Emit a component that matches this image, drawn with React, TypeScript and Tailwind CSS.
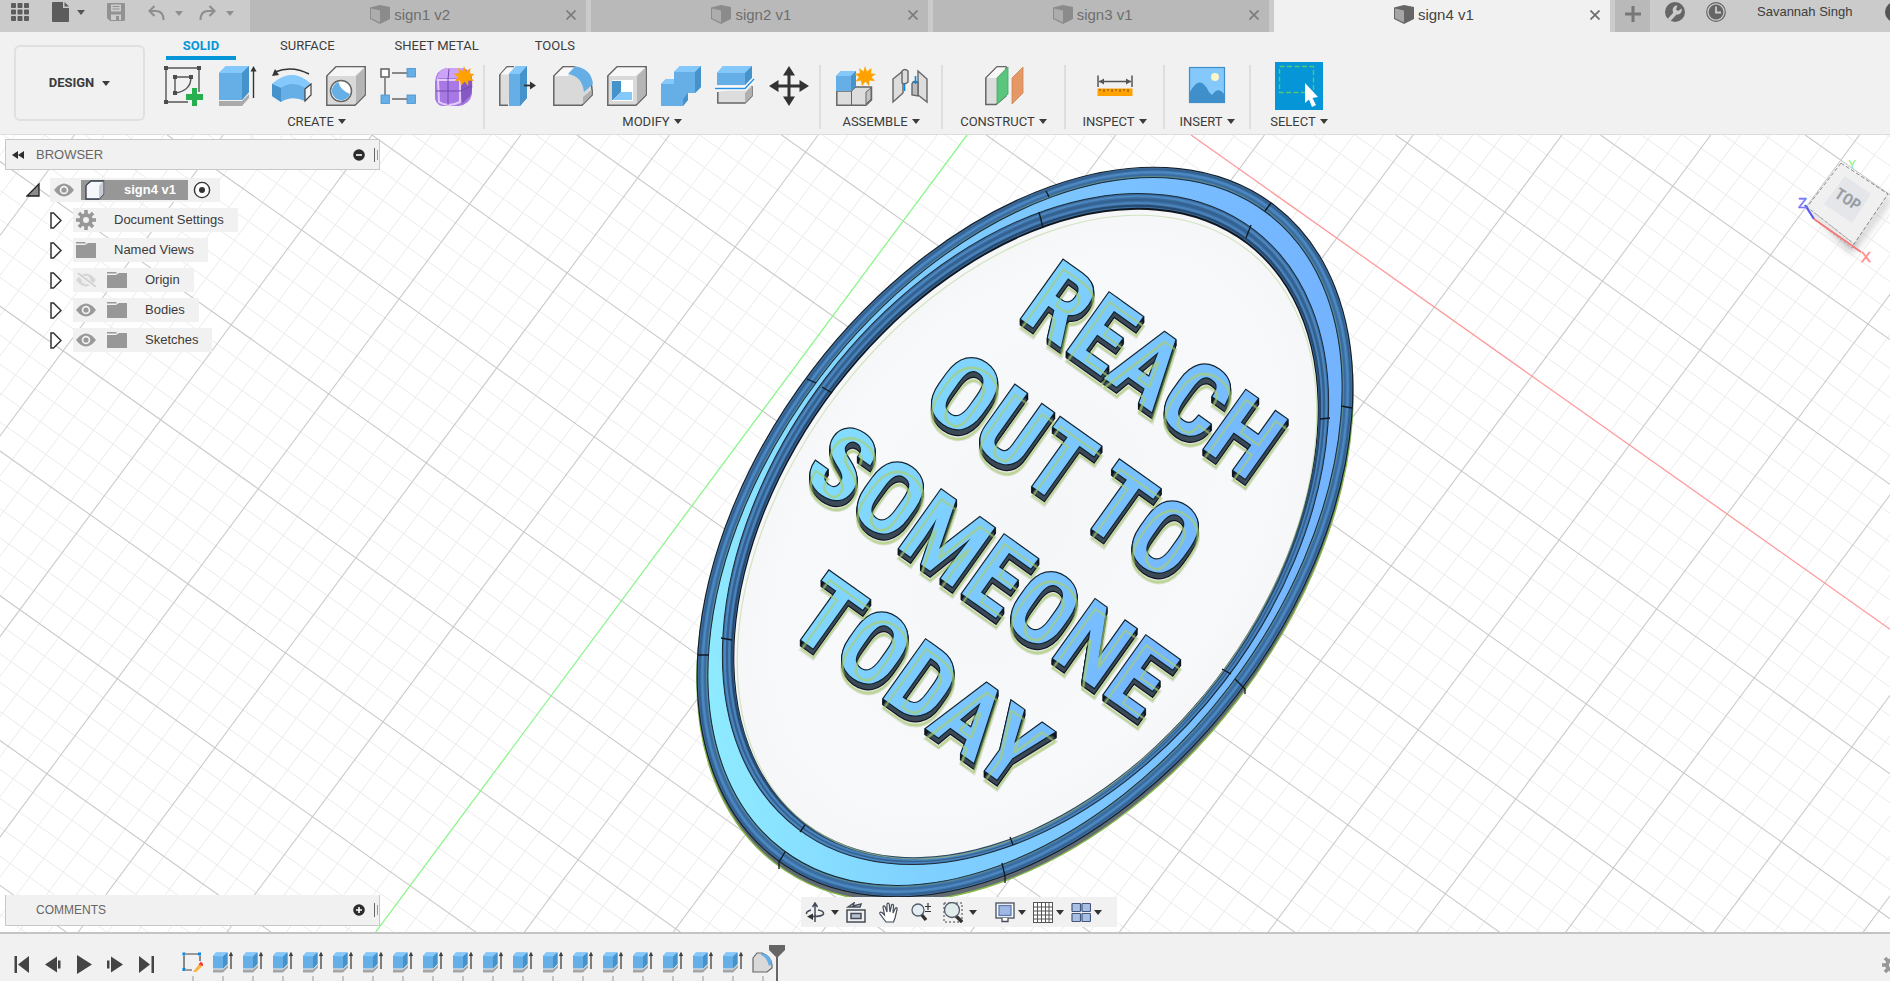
import React from 'react';

type IconProps = { className?: string };

const Caret = ({ className = 'w-2 h-[5px]' }: IconProps) => (
  <svg viewBox="0 0 8 5" className={className} aria-hidden="true">
    <path d="M0 0H8L4 5Z" fill="currentColor" />
  </svg>
);

/* ---------- top bar icons ---------- */

const AppsIcon = () => (
  <svg viewBox="0 0 18 18" className="size-[18px]" fill="#5c5c5c">
    {[0, 6.5, 13].map((y) => [0, 6.5, 13].map((x) => <rect key={`${x}-${y}`} x={x} y={y} width="5" height="5" rx="0.8" />))}
  </svg>
);
const FileIcon = () => (
  <svg viewBox="0 0 17 20" className="w-[17px] h-5" fill="#5c5c5c">
    <path d="M1 0H11V6H17V19Q17 20 16 20H1Q0 20 0 19V1Q0 0 1 0ZM12.5 0L17 4.5H12.5Z" />
  </svg>
);
const SaveIcon = () => (
  <svg viewBox="0 0 18 18" className="size-[18px]">
    <path d="M1 0H17Q18 0 18 1V17Q18 18 17 18H3L0 15V1Q0 0 1 0Z" fill="#929292" />
    <rect x="4" y="1.5" width="10" height="7" fill="#cbcbcb" />
    <path d="M5.5 3.5H12.5M5.5 6H12.5" stroke="#929292" strokeWidth="1.2" />
    <rect x="4" y="11.5" width="10" height="5.5" fill="#cbcbcb" />
    <rect x="9" y="13" width="3" height="4" fill="#929292" />
  </svg>
);
const UndoIcon = ({ className = 'w-[17px] h-4' }: IconProps) => (
  <svg viewBox="0 0 17 16" className={className} fill="none" stroke="#8f8f8f" strokeWidth="2.2">
    <path d="M6.5 1L1.5 6L6.5 11" />
    <path d="M2 6H8.5Q15.5 6.5 15.5 15" />
  </svg>
);
const DocCube = ({ dim }: { dim?: boolean }) => (
  <svg viewBox="0 0 20 19" className="w-5 h-[19px]">
    <path d="M0 2.5L10 0L20 2V14L10 19L0 14Z" fill={dim ? '#8b8b8b' : '#666'} />
    <path d="M1 3.5L10 5.5V17.5L1 13.3Z" fill={dim ? '#adadad' : '#a5a5a5'} />
  </svg>
);
const CrossIcon = ({ dim }: { dim?: boolean }) => (
  <svg viewBox="0 0 10 10" className="size-2.5" stroke={dim ? '#7d7d7d' : '#6d6d6d'} strokeWidth="1.7">
    <path d="M0.5 0.5L9.5 9.5M9.5 0.5L0.5 9.5" />
  </svg>
);
const WrenchBadge = () => (
  <svg viewBox="0 0 20 20" className="size-5">
    <circle cx="10" cy="10" r="10" fill="#666" />
    <path d="M4 18L10 11.5" stroke="#cbcbcb" strokeWidth="3.6" />
    <path d="M16.5 6.5A4.6 4.6 0 1 1 12.5 3.5L11 7.5L13 9Z" fill="#cbcbcb" />
  </svg>
);
const ClockBadge = () => (
  <svg viewBox="0 0 20 20" className="size-5">
    <circle cx="10" cy="10" r="9.3" fill="none" stroke="#666" strokeWidth="1.2" />
    <circle cx="10" cy="10" r="7.4" fill="#666" />
    <path d="M10 4.500V10.500H15" fill="none" stroke="#cbcbcb" strokeWidth="1.800" />
  </svg>
);

/* ---------- ribbon icons ---------- */

const box = 'size-10 block';
const burst = 'M30 0L32 5.500L36.500 2L36 7.500L41 8L36.500 11L40 15L34.500 14.500L34 20L30.500 15.500L27 20L26 14.500L20.500 15.500L24 11L19.500 8L25 7L24 2L28.500 5.500Z';

const SketchIcon = () => (
  <svg viewBox="0 0 40 40" className={box}>
    <path d="M3 2H35V26M2 3V36H24" fill="none" stroke="#555" strokeWidth="1.400" />
    <path d="M11 27V11H27Q27 25 11 27" fill="none" stroke="#555" strokeWidth="1.400" />
    {[[0, 0], [33, 0], [0, 34], [9, 9], [25, 9], [9, 25]].map(([x, y]) => <rect key={`${x}-${y}`} x={x} y={y} width="4" height="4" fill="#4d4d4d" />)}
    <path d="M22 28H28V22H33V28H39V34H33V40H28V34H22Z" fill="#27ae4f" />
  </svg>
);
const ExtrudeIcon = () => (
  <svg viewBox="0 0 40 40" className={box}>
    <path d="M1 35H24L31 28V32L24 40H1Z" fill="#aaa" />
    <path d="M1 7L8 0H31V26L24 34H1Z" fill="#66aee6" />
    <path d="M1 7L8 0H31L24 7Z" fill="#84c8fc" />
    <path d="M24 7L31 0V26L24 34Z" fill="#4693cc" />
    <path d="M35.500 32V4" stroke="#333" strokeWidth="1.400" />
    <path d="M32.500 5.500L35.500 0L38.500 5.500Z" fill="#333" />
  </svg>
);
const RevolveIcon = () => (
  <svg viewBox="0 0 40 40" className={box}>
    <path d="M3 6Q20 -1 37 8" fill="none" stroke="#333" strokeWidth="1.500" />
    <path d="M0 10L3 3L7 9Z" fill="#333" />
    <path d="M0 18Q20 1 39 18L33 35Q20 29 9 36L0 30Z" fill="#66aee6" />
    <path d="M0 18Q20 0 39 18L33 22Q20 14 9 22Z" fill="#84c8fc" />
    <path d="M0 18L9 22V36L0 30Z" fill="#4693cc" />
    <path d="M33 23L39 18V29L33 35Z" fill="#f5f5f5" stroke="#444" strokeWidth="1.200" />
  </svg>
);
const HoleIcon = () => (
  <svg viewBox="0 0 40 40" className={box}>
    <path d="M0.800 10L10 0.800H39.200V29L29 39.200H0.800Z" fill="#d9d9d9" stroke="#666" strokeWidth="1.500" />
    <path d="M2 10L10.500 1.500H38L29 10Z" fill="#f6f6f6" />
    <path d="M30 10L38.500 2V28.500L30 37.500Z" fill="#b5b5b5" />
    <circle cx="15" cy="25" r="10.500" fill="#fff" stroke="#666" strokeWidth="1.500" />
    <path d="M12.500 16Q14 24 24 28A9.300 9.300 0 1 1 12.500 16Z" fill="#66aee6" />
  </svg>
);
const PatternIcon = () => (
  <svg viewBox="0 0 40 40" className={box}>
    <path d="M12 7H28M5 12V29M12 33H28" stroke="#666" strokeWidth="1.400" />
    <rect x="1" y="3" width="8" height="8" fill="#fff" stroke="#555" strokeWidth="1.400" />
    {[[27, 2.500], [1, 29], [27, 29]].map(([x, y]) => <rect key={`${x}-${y}`} x={x} y={y} width="8.500" height="8.500" fill="#66aee6" stroke="#4693cc" strokeWidth="0.800" />)}
  </svg>
);
const FormIcon = () => (
  <svg viewBox="0 0 40 40" className={box}>
    <path d="M1 16Q2 4 12 2H30Q38 6 38 14V28Q36 38 25 40H8Q0 38 1 28Z" fill="#a878e4" />
    <path d="M2 15Q4 4 12 2H30L24 12H5Z" fill="#cba4f7" />
    <path d="M26 14L37 8Q40 22 36 30L28 38Z" fill="#8558c4" />
    <path d="M4 14H26V36Q14 42 5 36Z" fill="none" stroke="#e2ccfb" strokeWidth="2" />
    <path d="M15 3L14 13V39M2 25H26L38 20" stroke="#7148ae" fill="none" strokeWidth="1" />
    <path d={burst} fill="#ffa200" />
  </svg>
);
const PressPullIcon = () => (
  <svg viewBox="0 0 40 40" className={box}>
    <path d="M9 39.200H0.800V9L8 0.800H15" fill="#ddd" stroke="#666" strokeWidth="1.500" />
    <path d="M1.500 8.500L8 1.500H16L9 8.500Z" fill="#f8f8f8" />
    <path d="M10 8L17 0H28V32L21 40H10Z" fill="#66aee6" />
    <path d="M10 8L17 0H28L21 8Z" fill="#84c8fc" />
    <path d="M21 8L28 0V32L21 40Z" fill="#4693cc" />
    <path d="M25 19.500H33" stroke="#333" strokeWidth="1.800" />
    <path d="M31 15.500L37 19.500L31 23.500Z" fill="#333" />
  </svg>
);
const FilletIcon = () => (
  <svg viewBox="0 0 40 40" className={box}>
    <path d="M0.800 10L10 0.800H20Q38 4 39.200 25V29L29 39.200H0.800Z" fill="#d9d9d9" stroke="#666" strokeWidth="1.500" />
    <path d="M1.800 10L10.500 1.600H22L15 10Z" fill="#f8f8f8" />
    <path d="M30 31L38.500 24V29L30 38Z" fill="#b0b0b0" />
    <path d="M15 8L22 0.500Q38 2 40 18L31 26Q29 10 15 8Z" fill="#66aee6" />
  </svg>
);
const ShellIcon = () => (
  <svg viewBox="0 0 40 40" className={box}>
    <path d="M0.800 10L10 0.800H39.200V29L29 39.200H0.800Z" fill="#d9d9d9" stroke="#666" strokeWidth="1.500" />
    <path d="M2 10L10.500 1.500H38L29 10Z" fill="#f8f8f8" />
    <path d="M30 10L38.500 2V28.500L30 37.500Z" fill="#b5b5b5" />
    <rect x="5" y="14" width="21" height="21" fill="#fff" />
    <path d="M5 15H14V26L6 34H5Z" fill="#4693cc" />
    <path d="M14 26H25V34H6Z" fill="#84c8fc" />
  </svg>
);
const CombineIcon = () => (
  <svg viewBox="0 0 40 40" className={box}>
    <path d="M0 18L5 13H13V6L19 0H40V21L34 27H27V34L22 40H0Z" fill="#66aee6" />
    <path d="M13 6L19 0H40L34 6ZM0 18L5 13H13V18Z" fill="#84c8fc" />
    <path d="M34 6L40 0V21L34 27ZM22 33L27 27V34L22 40Z" fill="#4693cc" />
  </svg>
);
const SplitIcon = () => (
  <svg viewBox="0 0 40 40" className={box}>
    <path d="M2.800 26V37H30L37 30V20" fill="#ddd" stroke="#666" strokeWidth="1.500" />
    <path d="M30 27L37 20V30L30 37Z" fill="#b0b0b0" />
    <path d="M2 7L8 0H37V12L30 19H2Z" fill="#66aee6" />
    <path d="M2 7L8 0H37L30 7Z" fill="#84c8fc" />
    <path d="M30 7L37 0V12L30 19Z" fill="#4693cc" />
    <path d="M0 22.500H30L39 13" fill="none" stroke="#fff" strokeWidth="4" />
    <path d="M0 22.500H30L39 13" fill="none" stroke="#2a8fe0" strokeWidth="1.500" />
  </svg>
);
const MoveIcon = () => (
  <svg viewBox="0 0 40 40" className={box} fill="#333">
    <path d="M20 0L26 9.500H21.500V18.500H30.500V14L40 20L30.500 26V21.500H21.500V30.500H26L20 40L14 30.500H18.500V21.500H9.500V26L0 20L9.500 14V18.500H18.500V9.500H14Z" />
  </svg>
);
const ComponentIcon = () => (
  <svg viewBox="0 0 40 40" className={box}>
    <path d="M0.800 25V39.200H30L35.500 34V21H18L15 25Z" fill="#ddd" stroke="#666" strokeWidth="1.500" />
    <path d="M15.500 25V39M15.500 25L20 21M30 26V38L35 33V22Z" stroke="#666" fill="#c4c4c4" />
    <path d="M0 10L5 5H20V20L15 25H0Z" fill="#66aee6" />
    <path d="M0 10L5 5H20L15 10Z" fill="#84c8fc" />
    <path d="M15 10L20 5V20L15 25Z" fill="#4693cc" />
    <path d={burst} fill="#ffa200" transform="translate(-1 0)" />
  </svg>
);
const JointIcon = () => (
  <svg viewBox="0 0 40 40" className={box} stroke="#666" strokeWidth="1.400">
    <path d="M3 13L13 5V27L3 36Z" fill="#ddd" />
    <path d="M12 5Q15 2 18 5V16Q15 19 12 17Z" fill="#ddd" />
    <path d="M37 13L28 5V29L37 36Z" fill="#ddd" />
    <path d="M28 16Q23 14 22 18V29L28 30Z" fill="#bbb" />
    <path d="M14.500 18V25M25.500 10V18M23.500 16H27.500" stroke="#0a84dc" strokeWidth="1.600" fill="none" />
  </svg>
);
const PlaneIcon = () => (
  <svg viewBox="0 0 40 40" className={box}>
    <path d="M1.800 12L13 0.800H22V30L12 38.500H1.800Z" fill="#ddd" stroke="#666" strokeWidth="1.500" />
    <path d="M2.800 12L13 1.600H22L12 12Z" fill="#f8f8f8" />
    <path d="M13 12L24 1V28L13 38Z" fill="#5bc57d" stroke="#3fa863" strokeWidth="0.800" />
    <path d="M28 12L39 1V27L28 38Z" fill="#e59866" stroke="#cf8350" strokeWidth="0.800" />
  </svg>
);
const MeasureIcon = () => (
  <svg viewBox="0 0 40 40" className={box}>
    <path d="M3 9.500V21M37 9.500V21M4 15.500H36" stroke="#555" strokeWidth="1.500" />
    <path d="M4 15.500L9 12.500V18.500ZM36 15.500L31 12.500V18.500Z" fill="#555" />
    <rect x="2.500" y="22.500" width="35" height="7.500" fill="#ffa200" />
    <path d="M5 23V25M9 23V26M13 23V25M17 23V26M21 23V25M25 23V26M29 23V25M33 23V26" stroke="#8a5a00" strokeWidth="1.200" />
  </svg>
);
const InsertIcon = () => (
  <svg viewBox="0 0 40 40" className={box}>
    <rect x="2.500" y="1.500" width="35" height="35" fill="#84c8fc" stroke="#3f8fca" strokeWidth="1.200" />
    <path d="M3 26Q13 7 22 26L25 29Q31 20 37 28V36H3Z" fill="#3f8fca" />
    <circle cx="28" cy="11" r="4" fill="#fdf6c8" />
  </svg>
);
const SelectIcon = () => (
  <svg viewBox="0 0 48 48" className="size-12 block -my-1">
    <rect width="48" height="48" fill="#0696d7" />
    <rect x="4.500" y="4.500" width="34" height="26" fill="none" stroke="#52c878" strokeWidth="1.400" strokeDasharray="5 2.500" />
    <path d="M30 21L43 35L37.500 36L41 43L37 45L34 37.500L30 41Z" fill="#fff" />
  </svg>
);

/* ---------- ribbon ---------- */

type Group = { label: string; width: string; tools: [string, React.FC][] };

const groups: Group[] = [
  { label: 'CREATE', width: 'w-[335px]', tools: [['Create sketch', SketchIcon], ['Extrude', ExtrudeIcon], ['Revolve', RevolveIcon], ['Hole', HoleIcon], ['Pattern', PatternIcon], ['Create form', FormIcon]] },
  { label: 'MODIFY', width: 'w-[336px]', tools: [['Press pull', PressPullIcon], ['Fillet', FilletIcon], ['Shell', ShellIcon], ['Combine', CombineIcon], ['Split body', SplitIcon], ['Move', MoveIcon]] },
  { label: 'ASSEMBLE', width: 'w-[122px]', tools: [['New component', ComponentIcon], ['Joint', JointIcon]] },
  { label: 'CONSTRUCT', width: 'w-[123px]', tools: [['Offset plane', PlaneIcon]] },
  { label: 'INSPECT', width: 'w-[99px]', tools: [['Measure', MeasureIcon]] },
  { label: 'INSERT', width: 'w-[86px]', tools: [['Insert image', InsertIcon]] },
  { label: 'SELECT', width: 'w-24', tools: [['Select', SelectIcon]] },
];

const TopBar = () => (
  <header className="flex h-8 shrink-0 bg-[#cbcbcb]">
    <div className="flex w-[250px] shrink-0 items-start pl-[11px] pt-[3px] text-[#8f8f8f]">
      <button aria-label="Data panel"><AppsIcon /></button>
      <button aria-label="File" className="-mt-px ml-[23px] flex items-center gap-2 text-[#555]"><FileIcon /><Caret /></button>
      <button aria-label="Save" className="ml-[22px]"><SaveIcon /></button>
      <button aria-label="Undo" className="ml-[23px] mt-0.5 flex items-center gap-2.5"><UndoIcon /><Caret /></button>
      <button aria-label="Redo" className="ml-4 mt-0.5 flex items-center gap-2.5"><UndoIcon className="w-[17px] h-4 -scale-x-100" /><Caret /></button>
    </div>
    <nav className="flex flex-1 gap-[5px]">
      {['sign1 v2', 'sign2 v1', 'sign3 v1', 'sign4 v1'].map((name, i) => {
        const active = i === 3;
        return (
          <div key={name} className={`flex flex-1 items-center pr-2.5 ${active ? 'bg-[#f1f1f1] text-[#444]' : 'bg-[#b9b9b9] text-[#6e6e6e]'}`}>
            <a href="#" className="flex flex-1 items-center justify-center gap-1 pb-1 pl-1 text-[15px] leading-5">
              <DocCube dim={!active} />
              <span className="pt-0.5">{name}</span>
            </a>
            <button aria-label={`Close ${name}`} className="pb-0.5"><CrossIcon dim={!active} /></button>
          </div>
        );
      })}
    </nav>
    <div className="flex w-[280px] shrink-0 items-start overflow-hidden pl-[5px]">
      <button aria-label="New tab" className="flex h-8 w-[35px] shrink-0 items-center justify-center bg-[#b9b9b9]">
        <svg viewBox="0 0 16 16" className="-mt-1 size-4" stroke="#777" strokeWidth="3"><path d="M8 0V16M0 8H16" /></svg>
      </button>
      <button aria-label="Extensions" className="ml-[15px] mt-0.5 shrink-0"><WrenchBadge /></button>
      <button aria-label="Job status" className="ml-[21px] mt-0.5 shrink-0"><ClockBadge /></button>
      <span className="ml-[31px] mt-1 shrink-0 whitespace-nowrap text-[13px] leading-4 text-[#3c3c3c]">Savannah Singh</span>
      <span className="ml-[33px] mt-0.5 size-5 shrink-0 rounded-full bg-[#555]" />
    </div>
  </header>
);

const Ribbon = () => (
  <section className="flex h-[103px] shrink-0 border-b border-[#dcdcdc] bg-[#f1f1f1] font-['Roboto','Liberation_Sans',sans-serif] text-[13px] leading-4 text-[#3c3c3c]">
    <button className="ml-3.5 mt-[13px] flex h-[76px] w-[131px] items-center justify-center gap-2 rounded-md border-2 border-[#e0e0e0] font-bold">
      DESIGN <Caret />
    </button>
    <div className="ml-[5px] flex flex-col">
      <nav className="flex h-7 items-stretch pl-4">
        <a href="#" className="flex w-[70px] justify-center border-b-4 border-[#0696d7] pt-1.5 font-bold text-[#0696d7]">SOLID</a>
        <a href="#" className="ml-11 pt-1.5">SURFACE</a>
        <a href="#" className="ml-[60px] pt-1.5">SHEET METAL</a>
        <a href="#" className="ml-14 pt-1.5">TOOLS</a>
      </nav>
      <div className="mt-[5px] flex h-16">
        {groups.map((g, i) => (
          <div key={g.label} className={`flex flex-col items-center ${g.width} ${i < groups.length - 1 ? 'border-r-2 border-[#dedede]' : ''}`}>
            <div className={`flex h-[41px] items-start gap-3.5 pt-px ${g.tools.length > 1 ? 'pl-1' : ''}`}>
              {g.tools.map(([name, Icon]) => (
                <button key={name} aria-label={name}><Icon /></button>
              ))}
            </div>
            <button className="mt-2 flex items-center gap-1">{g.label}<Caret className="mb-0.5 w-2 h-[5px]" /></button>
          </div>
        ))}
      </div>
    </div>
  </section>
);

/* ---------- modelling canvas ---------- */

const span = (from: number, to: number) => Array.from({ length: to - from + 1 }, (_, i) => from + i);
const H = 1600;

const Grid = () => (
  <g>
    {[false, true].map((major) => (
      <g key={String(major)} stroke={major ? '#cacaca' : '#ebebeb'} strokeWidth={major ? 1.1 : 1}>
        {span(-40, 110).filter((k) => k !== 0 && (k % 5 === 0) === major).map((k) => (
          <line key={`a${k}`} x1={967 + k * 29.75} y1="0" x2={967 + k * 29.75 - H / 1.348} y2={H} />
        ))}
        {span(-90, 50).filter((k) => k !== 0 && (k % 5 === 0) === major).map((k) => (
          <line key={`b${k}`} x1={1191 + k * 40.95} y1="0" x2={1191 + k * 40.95 + H / 0.707} y2={H} />
        ))}
      </g>
    ))}
    <line x1="967" y1="0" x2={967 - H / 1.348} y2={H} stroke="#8cf58c" strokeWidth="1.3" />
    <line x1="1191" y1="0" x2={1191 + H / 0.707} y2={H} stroke="#ff9a9a" strokeWidth="1.3" />
  </g>
);

type RingProps = { cx: number; cy: number; rx: number; ry: number; fill?: string; stroke?: string; w?: number; o?: number };
const Ring = ({ cx, cy, rx, ry, fill = 'none', stroke = 'none', w = 1, o = 1 }: RingProps) => (
  <ellipse cx={cx} cy={cy} rx={rx} ry={ry} transform={`rotate(-52.6 ${cx} ${cy})`} fill={fill} stroke={stroke} strokeWidth={w} opacity={o} />
);

const lines: [string, number, number][] = [
  ['REACH', 1153, -335],
  ['OUT TO', 1136, -205],
  ['SOMEONE', 1136, -77],
  ['TODAY', 1143, 54],
];

const Sign = () => (
  <g transform="translate(0 -133)">
    <defs>
      <linearGradient id="face" gradientUnits="userSpaceOnUse" x1="700" y1="560" x2="1340" y2="500" gradientTransform="rotate(52.6 1024 529)">
        <stop offset="0" stopColor="#8eeaff" />
        <stop offset="0.3" stopColor="#7fd0ff" />
        <stop offset="0.65" stopColor="#7bc4ff" />
        <stop offset="1" stopColor="#74b4ff" />
      </linearGradient>
      <linearGradient id="letter" gradientUnits="userSpaceOnUse" x1="930" y1="0" x2="1340" y2="-60">
        <stop offset="0" stopColor="#84dfff" />
        <stop offset="1" stopColor="#74b6ff" />
      </linearGradient>
      <radialGradient id="plate" cx="0.5" cy="0.5" r="0.6">
        <stop offset="0" stopColor="#f5f6f8" />
        <stop offset="0.7" stopColor="#f8f9fa" />
        <stop offset="1" stopColor="#f3f3f5" />
      </radialGradient>
      <filter id="contour" x="-5%" y="-5%" width="110%" height="110%">
        <feMorphology in="SourceAlpha" operator="dilate" radius="0.6" result="grown" />
        <feMorphology in="SourceAlpha" operator="erode" radius="0.6" result="shrunk" />
        <feComposite in="grown" in2="shrunk" operator="out" result="edge" />
        <feFlood floodColor="#a9cf6c" />
        <feComposite in2="edge" operator="in" />
      </filter>
      <g id="legend" textAnchor="middle" fontFamily="'Roboto Condensed', 'Roboto', sans-serif" fontWeight="700" fontSize="102" style={{ paintOrder: 'stroke' }}>
        {lines.map(([t, x, y]) => <text key={t} x={x} y={y}>{t}</text>)}
      </g>
    </defs>

    <Ring cx={1025} cy={535} rx={411} ry={268} fill="#626a72" stroke="#86b84a" w={1.4} />
    <Ring cx={1025} cy={530} rx={411} ry={267.5} fill="#4278ae" stroke="#16202a" w={1.2} />
    <Ring cx={1025} cy={530} rx={409} ry={265} stroke="#34618f" w={2} />
    <Ring cx={1025} cy={530} rx={406} ry={262} stroke="#4c88c1" w={2} />
    <Ring cx={1025} cy={530} rx={403} ry={259.5} stroke="#3a6ca0" w={2} />
    <Ring cx={1025} cy={529.5} rx={401.5} ry={257.5} stroke="#7ba65c" w={0.8} o={0.5} />
    <Ring cx={1025} cy={529.5} rx={400} ry={256.5} fill="url(#face)" stroke="#1c2a38" w={1} />
    <Ring cx={1025.5} cy={527} rx={376.5} ry={250.5} fill="#3a6da1" stroke="#1c2a38" w={1} />
    <Ring cx={1025.5} cy={527.5} rx={374} ry={248} stroke="#4c87c0" w={2} />
    <Ring cx={1025.5} cy={528.5} rx={371.5} ry={246} stroke="#34618f" w={2} />
    <Ring cx={1025.5} cy={529.5} rx={369} ry={244} stroke="#4a83bb" w={2} />
    <Ring cx={1026} cy={530} rx={366.5} ry={242} stroke="#27496d" w={2} />
    <Ring cx={1026} cy={530.5} rx={365} ry={240.5} fill="#10161c" />
    <Ring cx={1026} cy={531.5} rx={364} ry={239.5} fill="url(#plate)" />
    <Ring cx={1027} cy={535} rx={362} ry={237.5} stroke="#b9d79a" w={1.2} o={0.6} />

    <path
      d="M1046 189L1049 195M1039 210L1043 226M1271 201L1265 209M1251 223L1246 236M1341 404L1352 406M1320 417L1330 416M807 377L816 381M822 385L832 391M698 653L709 653M721 636L732 638M1222 667L1231 672M1235 677L1245 687V692M785 850L779 860V867M805 823L800 830M1002 861L1005 874V881M1010 835L1013 843"
      stroke="#101820" strokeWidth="1.3" fill="none"
    />

    <g transform="rotate(35.5)">
      <use href="#legend" transform="translate(5.8 8.1)" fill="#e4e4e7" stroke="#e4e4e7" strokeWidth="4" />
      {span(1, 6).map((d) => (
        <use key={d} href="#legend" transform={`translate(${d * 0.56} ${d * 0.79})`} fill="#3b4856" stroke="#10161c" strokeWidth="2.4" />
      ))}
      <use href="#legend" fill="url(#letter)" stroke="#10222f" strokeWidth="2.4" />
      <g filter="url(#contour)" opacity="0.7">
        <use href="#legend" transform="translate(5.8 8.1)" fill="#000" />
      </g>
    </g>
  </g>
);

const ViewCube = () => (
  <svg viewBox="0 0 130 140" className="absolute right-0 top-0 h-[140px] w-[130px]" aria-label="View cube">
    <defs><filter id="soft"><feGaussianBlur stdDeviation="4" /></filter></defs>
    <text x="88" y="34" fontSize="12" fill="#7ef07e" fontFamily="Liberation Sans, sans-serif">Y</text>
    <path d="M55 80L92 118L130 66V58L96 104Z" fill="#999" opacity="0.7" filter="url(#soft)" />
    <path d="M81 28L128 59L94 109L47 72Z" fill="#f0f0f1" stroke="#8a8a8a" strokeWidth="1" strokeDasharray="4 2" />
    <path d="M47 72L94 109L92 113L54 84Z" fill="#e9e9e9" stroke="#999" strokeWidth="0.8" strokeDasharray="3 1.5" />
    <path d="M85 41L111 59L92 88L64 69Z" fill="#e4e6e9" />
    <text x="0" y="0" transform="translate(85 69) rotate(33)" textAnchor="middle" fontSize="16" fontWeight="700" fill="#9a9fa5" fontFamily="Roboto Condensed, Roboto, sans-serif">TOP</text>
    <path d="M45 70L54 84" stroke="#5858f0" strokeWidth="2.2" />
    <path d="M54 84L101 117" stroke="#f57878" strokeWidth="1.8" />
    <text x="38" y="73" fontSize="15" fill="#7a7af8" stroke="#7a7af8" strokeWidth="0.5" fontFamily="Liberation Sans, sans-serif">Z</text>
    <text x="101" y="127" fontSize="15" fill="#ff8f8f" stroke="#ff8f8f" strokeWidth="0.5" fontFamily="Liberation Sans, sans-serif">X</text>
  </svg>
);

/* ---------- browser tree ---------- */

const Eye = ({ off }: { off?: boolean }) => (
  <svg viewBox="0 0 20 14" className="h-3.5 w-5 shrink-0">
    <g opacity={off ? 0.3 : 1}>
      <path d="M0 7Q10 -6 20 7Q10 20 0 7Z" fill="#999" />
      <circle cx="10" cy="7" r="4.3" fill="#f1f1f1" />
      <circle cx="10" cy="7" r="2.6" fill="#999" />
    </g>
    {off && <path d="M1 0L19 14" stroke="#f1f1f1" strokeWidth="4" />}
    {off && <path d="M2 0L20 14" stroke="#cfcfcf" strokeWidth="1.6" />}
  </svg>
);
const Folder = () => (
  <svg viewBox="0 0 20 16" className="h-4 w-5 shrink-0" fill="#989898">
    <path d="M0 0H9L10 1.5H0ZM0 3H9L12 1H20V16H0Z" />
  </svg>
);
const Gear = () => (
  <svg viewBox="0 0 20 20" className="size-5 shrink-0">
    <g fill="#989898">
      {span(0, 3).map((i) => <rect key={i} x="8.2" y="0" width="3.6" height="20" transform={`rotate(${i * 45} 10 10)`} />)}
      <circle cx="10" cy="10" r="6.8" />
    </g>
    <circle cx="10" cy="10" r="3" fill="#f1f1f1" />
  </svg>
);
const Twisty = () => (
  <button aria-label="Expand" className="shrink-0">
    <svg viewBox="0 0 12 17" className="block h-[17px] w-3"><path d="M1 1H3.5L11 8.5L3.5 16H1Z" fill="#fff" stroke="#333" strokeWidth="1.5" /></svg>
  </button>
);

const nodes: { name: string; eye?: 'on' | 'off'; gear?: boolean }[] = [
  { name: 'Document Settings', gear: true },
  { name: 'Named Views' },
  { name: 'Origin', eye: 'off' },
  { name: 'Bodies', eye: 'on' },
  { name: 'Sketches', eye: 'on' },
];

const PanelBadge = ({ plus }: { plus?: boolean }) => (
  <svg viewBox="0 0 12 12" className="size-3">
    <circle cx="6" cy="6" r="5.8" fill="#2c2c2c" />
    <path d={plus ? 'M3 6H9M6 3V9' : 'M3 6H9'} stroke="#fff" strokeWidth="1.6" />
  </svg>
);
const Grip = () => <span className="ml-[9px] mr-px flex h-3.5 items-center gap-0.5"><i className="h-3.5 w-px bg-[#666]" /><i className="h-2.5 w-px bg-[#999]" /></span>;

const BrowserPanel = () => (
  <aside className="absolute left-[5px] top-1 w-[375px] text-[13px] text-[#3c3c3c]">
    <div className="flex h-[31px] items-center border border-[#c8c8c8] bg-[#f1f1f1] pl-1.5 text-[#666]">
      <button aria-label="Collapse">
        <svg viewBox="0 0 12 8" className="h-2 w-3" fill="#2c2c2c"><path d="M6 0V8L0 4ZM12 0V8L6 4Z" /></svg>
      </button>
      <h2 className="ml-3 flex-1 text-[13px]">BROWSER</h2>
      <button aria-label="Minimise"><PanelBadge /></button>
      <Grip />
    </div>
    <ul className="mt-2 flex flex-col gap-1.5">
      <li className="flex h-6 items-center pl-[21px]">
        <button aria-label="Collapse sign4 v1">
          <svg viewBox="0 0 14 14" className="size-3.5"><path d="M13 1V13H1Z" fill="#8c8c8c" stroke="#222" strokeWidth="1.3" /></svg>
        </button>
        <div className="ml-2.5 flex h-6 w-[170px] items-center bg-[#f1f1f1] pl-1">
          <Eye />
          <div className="ml-[7px] flex h-5 w-[107px] items-center bg-[#979797] pl-1">
            <svg viewBox="0 0 20 20" className="size-5"><path d="M1 6Q1 5 6 1H18.5V14L14 19H1Z" fill="#f6f7fb" stroke="#333c4a" strokeWidth="1.3" /><path d="M14 6V19L18.5 14V1Z" fill="#c9ccd6" /></svg>
            <span className="ml-[19px] font-bold text-white">sign4 v1</span>
          </div>
          <svg viewBox="0 0 18 18" className="ml-[5px] size-[18px]"><circle cx="9" cy="9" r="7.6" fill="#fff" stroke="#333" strokeWidth="1.4" /><circle cx="9" cy="9" r="3" fill="#333" /></svg>
        </div>
      </li>
      {nodes.map((n) => (
        <li key={n.name} className="flex h-6 items-center pl-[45px]">
          <Twisty />
          <div className="ml-[11px] flex h-6 items-center bg-[#f1f1f1] pl-[3px] pr-3.5">
            {n.eye && <span className="mr-[11px] flex"><Eye off={n.eye === 'off'} /></span>}
            {n.gear ? <Gear /> : <Folder />}
            <span className="ml-[18px]">{n.name}</span>
          </div>
        </li>
      ))}
    </ul>
  </aside>
);

/* ---------- navigation bar ---------- */

const nav = 'h-[21px] w-5';
const NavBar = () => (
  <div className="absolute bottom-[5px] left-[801px] flex h-[30px] w-[316px] items-center bg-[#f1f1f1] pl-1 text-[#333]">
    <button aria-label="Orbit" className="flex items-center gap-1.5">
      <svg viewBox="0 0 20 21" className={nav} fill="none" stroke="#444c5a" strokeWidth="1.5"><path d="M10 20V3M7.5 5L10 1L12.5 5M6 8Q0 10 2 12M13 8Q19 9 18.5 12Q17 14.500 8 14.5" /><path d="M8 11.5V18L2 14.5Z" fill="#333" stroke="none" /></svg>
      <Caret />
    </button>
    <button aria-label="Look at" className="ml-[7px]">
      <svg viewBox="0 0 20 21" className={nav} fill="none" stroke="#444c5a" strokeWidth="1.5"><rect x="1" y="8" width="18" height="12" /><rect x="5" y="11.5" width="10" height="5" fill="#b9c0d0" /><path d="M2 5L8 1L7 4L15 2L14 5H2Z" /></svg>
    </button>
    <button aria-label="Pan" className="ml-[13px]">
      <svg viewBox="0 0 20 21" className={nav} fill="#fff" stroke="#444c5a" strokeWidth="1.2"><path d="M7 20L1 12Q0 9.5 3 10.5L5.5 13L4 5Q4.5 3 6 4.5L8 10L8 2Q9 0 10.2 2L11 10L12.5 3Q14 1.5 14.5 3.5L14 11L16.5 6Q18.5 5 18 7.5L16 16L14.5 20Z" /></svg>
    </button>
    <button aria-label="Zoom" className="ml-3">
      <svg viewBox="0 0 20 21" className={nav} fill="none"><path d="M10 12L15 18" stroke="#333" strokeWidth="3.4" /><circle cx="7" cy="8" r="6" fill="#e4eef2" stroke="#555e6a" strokeWidth="1.3" /><path d="M17 1V8M14 4.5H20M14 9.5H20" stroke="#333" strokeWidth="1.2" /></svg>
    </button>
    <button aria-label="Fit" className="ml-3 flex items-center gap-1.5">
      <svg viewBox="0 0 20 21" className={nav} fill="none"><rect x="1" y="1" width="18" height="19" stroke="#444" strokeDasharray="2 2" /><path d="M13 14L19 20" stroke="#333" strokeWidth="3.4" /><circle cx="9" cy="8" r="7.5" fill="#e0ecec" stroke="#555e6a" strokeWidth="1.3" /></svg>
      <Caret />
    </button>
    <button aria-label="Display settings" className="ml-[18px] flex items-center gap-[3px]">
      <svg viewBox="0 0 20 21" className={nav} fill="#fff" stroke="#444c5a" strokeWidth="1.3"><rect x="1" y="1" width="18" height="15" /><rect x="4" y="3.5" width="12" height="10" fill="#9fb9e4" stroke="#5b7ab0" /><path d="M7 16V19.5H13V16" /></svg>
      <Caret />
    </button>
    <button aria-label="Grid and snaps" className="ml-[7px] flex items-center gap-[3px]">
      <svg viewBox="0 0 20 21" className={nav} fill="#fff" stroke="#555" strokeWidth="1"><rect x="0.5" y="0.5" width="19" height="20" /><path d="M4.5 0V21M8.5 0V21M12.5 0V21M16 0V21M0 5H20M0 9H20M0 13H20M0 17H20" /></svg>
      <Caret />
    </button>
    <button aria-label="Viewports" className="ml-[7px] flex items-center gap-[3px]">
      <svg viewBox="0 0 20 21" className={nav} fill="#a9c0e6" stroke="#44557a" strokeWidth="1.2">{[[1, 1.5], [11, 1.5], [1, 11.5], [11, 11.5]].map(([x, y]) => <rect key={`${x}-${y}`} x={x} y={y} width="8.5" height="8" rx="0.8" />)}</svg>
      <Caret />
    </button>
  </div>
);

/* ---------- timeline ---------- */

const MiniExtrude = () => (
  <svg viewBox="0 0 21 21" className="h-[21px] w-[21px]">
    <path d="M1 17.5H11L16 13V15.5L11 20.5H1Z" fill="#a5a5a5" />
    <path d="M1 4L4 0.5H15.5V12L11 16.5H1Z" fill="#66aee6" />
    <path d="M1 4L4 0.5H15.5L11 4.5Z" fill="#84c8fc" />
    <path d="M11 4.5L15.5 0.5V12L11 16.5Z" fill="#4693cc" />
    <path d="M19 17V3M17.5 4L19 1L20.5 4" stroke="#333" strokeWidth="1.2" fill="none" />
  </svg>
);
const MiniSketch = () => (
  <svg viewBox="0 0 21 21" className="h-[21px] w-[21px]">
    <path d="M4 2H16M2 4V16M18 4V9M4 18H10" fill="none" stroke="#444" strokeWidth="1.2" />
    <path d="M0.5 0.5H3.5V3.5H0.5ZM16 0.5H19V3.5H16ZM0.5 16H3.5V19H0.5Z" fill="#0a84dc" />
    <path d="M11 20L18 11L21 13.5L14 20Z" fill="#fbb03b" /><path d="M16.5 12.5L19 9.5L21 12V14Z" fill="#f03a3a" />
  </svg>
);
const MiniFillet = () => (
  <svg viewBox="0 0 21 21" className="h-[21px] w-[21px]">
    <path d="M1 6L5 1H10Q19 4 20 13V16L15 20H1Z" fill="#d9d9d9" stroke="#666" strokeWidth="1.2" />
    <path d="M9 1Q19 2 20 12L17 14Q15 5 9 3Z" fill="#66aee6" />
  </svg>
);

const playback: [string, string][] = [
  ['Go to start', 'M0.5 1H3V18H0.5ZM15 1V18L4 9.5Z'],
  ['Step back', 'M12 1.5V17.5L0 9.5ZM13 5.5H15.5V13.5H13Z'],
  ['Play', 'M1 0L16 9.5L1 19Z'],
  ['Step forward', 'M0 5.5H2.5V13.5H0ZM4 1.5V17.5L16 9.5Z'],
  ['Go to end', 'M1 1V18L12 9.5ZM13.5 1H16V18H13.5Z'],
];

const Timeline = () => (
  <footer className="flex h-[49px] shrink-0 items-start overflow-hidden border-t-2 border-[#c4c4c4] bg-[#f1f1f1] pl-3.5">
    <div className="flex gap-[15px] pt-[21px]">
      {playback.map(([name, d]) => (
        <button key={name} aria-label={name}><svg viewBox="0 0 16 19" className="block h-[19px] w-4" fill="#444"><path d={d} /></svg></button>
      ))}
    </div>
    <div className="ml-7 flex gap-[9px] pt-[18px]">
      {span(0, 19).map((i) => (
        <button key={i} aria-label={`Feature ${i + 1}`} className="flex h-[30px] flex-col items-center justify-between">
          {i === 0 ? <MiniSketch /> : i === 19 ? <MiniFillet /> : <MiniExtrude />}
          <i className="h-1.5 w-0.5 bg-[#c4c4c4]" />
        </button>
      ))}
    </div>
    <svg viewBox="0 0 16 38" className="-ml-1 mt-[11px] h-[38px] w-4" fill="#666"><path d="M0 0H16V5L9 12V38H7V12L0 5Z" /></svg>
    <button aria-label="Timeline settings" className="-mr-3 ml-auto mt-[21px]"><Gear /></button>
  </footer>
);

export default function App() {
  return (
    <div className="flex h-screen min-h-[600px] flex-col overflow-hidden bg-white font-['Liberation_Sans',Arial,sans-serif]">
      <TopBar />
      <Ribbon />
      <main className="relative min-h-0 flex-1 overflow-hidden bg-white">
        <svg className="absolute inset-0 size-full" role="img" aria-label="Oval sign model">
          <Grid />
          <Sign />
        </svg>
        <ViewCube />
        <BrowserPanel />
        <section className="absolute bottom-1.5 left-[5px] flex h-[31px] w-[375px] items-center border border-t-0 border-[#c8c8c8] bg-[#f1f1f1] pl-[30px] text-xs text-[#666]">
          <h2 className="flex-1">COMMENTS</h2>
          <button aria-label="Add comment"><PanelBadge plus /></button>
          <Grip />
        </section>
        <NavBar />
      </main>
      <Timeline />
    </div>
  );
}
